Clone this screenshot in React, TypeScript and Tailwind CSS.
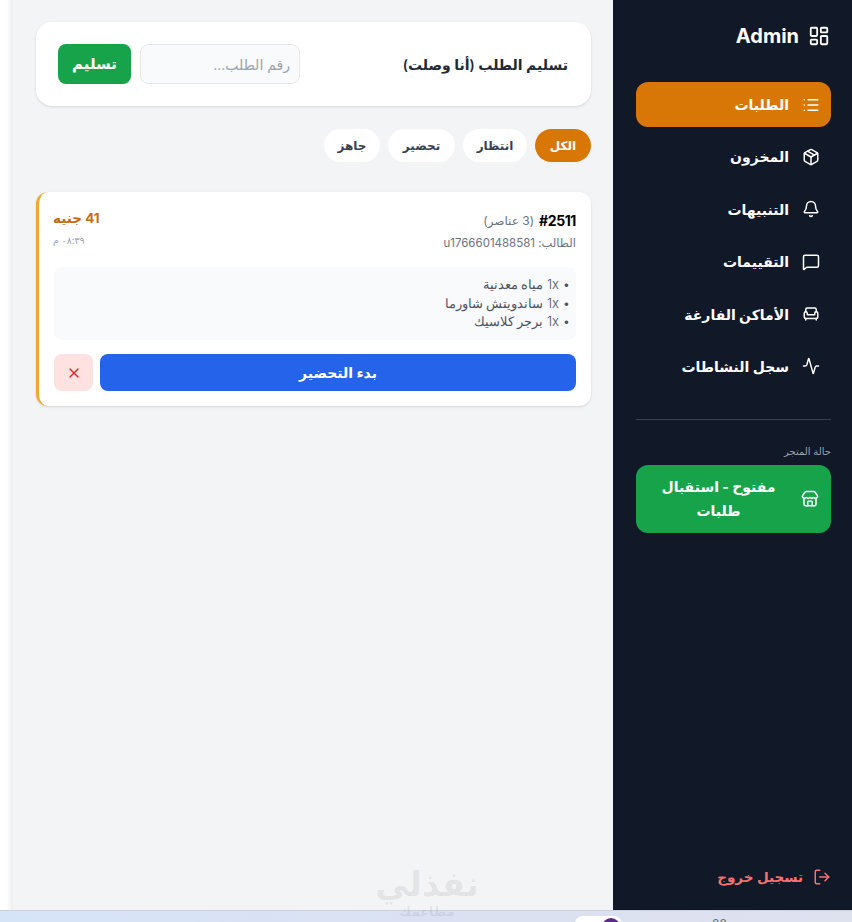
import { LayoutDashboard, List, Package, Bell, MessageSquare, Armchair, Activity, Store, LogOut, X } from "lucide-react";

const nav = [
  { label: "الطلبات", Icon: List, active: true },
  { label: "المخزون", Icon: Package },
  { label: "التنبيهات", Icon: Bell },
  { label: "التقييمات", Icon: MessageSquare },
  { label: "الأماكن الفارغة", Icon: Armchair },
  { label: "سجل النشاطات", Icon: Activity },
];

const chips = [
  { t: "الكل", c: "w-[56px] bg-[#d97706] font-bold text-white" },
  { t: "انتظار", c: "w-[64px] bg-white font-semibold text-[#374151]" },
  { t: "تحضير", c: "w-[67px] bg-white font-semibold text-[#374151]" },
  { t: "جاهز", c: "w-[56px] bg-white font-semibold text-[#374151]" },
];

const font = "font-['Inter','Noto_Sans','DejaVu_Sans',sans-serif]";

export default function App() {
  return (
    <div dir="rtl" className={`relative flex h-[922px] w-[852px] flex-col overflow-hidden bg-white ${font}`}>
      <div className="flex h-[910px] w-full shrink-0">
        <aside className="flex h-full w-[239px] shrink-0 flex-col bg-[#111827] pr-[21px] pl-[23px] text-white">
          <div className="flex h-[72px] items-center gap-[9px] pr-[1px]">
            <LayoutDashboard size={22} strokeWidth={2} />
            <span className="text-[20px] font-bold">Admin</span>
          </div>
          <nav className="mt-[10px] flex flex-col gap-[7.4px]">
            {nav.map(({ label, Icon, active }) => (
              <div key={label} className={`flex h-[45px] items-center gap-[13px] rounded-[12px] px-[11px] text-[14px] font-bold ${active ? "bg-[#d97706]" : ""}`}>
                <Icon size={18} />
                <span>{label}</span>
              </div>
            ))}
          </nav>
          <div className="mt-[30.4px] border-t border-[#374151] pt-[24px]">
            <div className="mb-[6px] text-[10px] text-[#9ca3af]">حالة المتجر</div>
            <div className="flex h-[68px] items-center gap-[12px] rounded-[12px] bg-[#16a34a] px-[12px] text-[14px] font-bold">
              <Store size={18} className="shrink-0" />
              <span className="flex-1 text-center leading-[24px]">مفتوح - استقبال طلبات</span>
            </div>
          </div>
          <div className="mt-auto mb-[23px] flex items-center gap-[10px] text-[13.5px] font-semibold text-[#f87171]">
            <LogOut size={18} />
            <span>تسجيل خروج</span>
          </div>
        </aside>
        <main className="h-full flex-1 bg-[#f3f4f6] pt-[22px] pr-[22px] pl-[23px]">
          <section className="flex h-[84px] items-center justify-between rounded-[16px] bg-white pr-[23px] pl-[22px] shadow-sm">
            <h2 className="text-[14px] font-semibold text-[#1f2937]">تسليم الطلب (أنا وصلت)</h2>
            <div className="flex gap-[9px]">
              <input placeholder="رقم الطلب..." className="h-[40px] w-[160px] rounded-[8px] border border-[#e5e7eb] bg-[#f9fafb] px-[9px] text-[14px] placeholder:text-[#9ca3af]" />
              <button className="h-[40px] w-[73px] rounded-[8px] bg-[#16a34a] text-[15px] font-bold text-white">تسليم</button>
            </div>
          </section>
          <div className="mt-[23px] flex gap-[8px]">
            {chips.map(({ t, c }) => (
              <button key={t} className={`h-[33px] rounded-full text-[12px] ${c}`}>{t}</button>
            ))}
          </div>
          <article className="mt-[30px] rounded-[12px] border-l-[3px] border-[#f0a92e] bg-white pt-[18px] pr-[15px] pb-[15px] pl-[15px] shadow-sm">
            <div className="flex items-start justify-between">
              <div>
                <div className="flex items-center gap-[5px]">
                  <span className="text-[14px] font-bold tracking-[-0.4px] text-black">#2511</span>
                  <span className="text-[12px] text-[#6b7280]">(3 عناصر)</span>
                </div>
                <div className="mt-[4px] text-[11.5px] text-[#6b7280]">الطالب: u1766601488581</div>
              </div>
              <div className="-mt-[1px] -ml-[1px] text-left">
                <div className="text-[13.5px] leading-[18px] font-bold text-[#c26d14]">41 جنيه</div>
                <div className="mt-[7px] text-[9.5px] text-[#9ca3af]">٠٨:٣٩ م</div>
              </div>
            </div>
            <div className="mt-[15px] h-[73px] rounded-[8px] bg-[#f9fafb] py-[8px] pr-[6px] pl-[8px] text-[13px] leading-[18.5px] font-light text-[#4b5563]">
              <div>• 1x مياه معدنية</div>
              <div>• 1x ساندويتش شاورما</div>
              <div>• 1x برجر كلاسيك</div>
            </div>
            <div className="mt-[14px] flex gap-[7px]">
              <button className="h-[37px] flex-1 rounded-[8px] bg-[#2563eb] text-[14px] font-bold text-white">بدء التحضير</button>
              <button className="flex h-[37px] w-[39px] items-center justify-center rounded-[8px] bg-[#fee2e2] text-[#dc2626]"><X size={16} /></button>
            </div>
          </article>
        </main>
        <div className="w-[13px] bg-gradient-to-r from-white via-white to-[#eceef0]"></div>
      </div>
      <div className="relative h-[12px] flex-1 border-t border-[#c8d0e0] bg-gradient-to-r from-[#d6e4f8] via-[#dbe1f2] to-[#dee1ee]">
        <div className="absolute top-[5px] left-[575px] h-[10px] w-[47px] rounded-t-[8px] bg-white"></div>
        <div className="absolute top-[7px] left-[602px] h-[10px] w-[18px] rounded-t-full bg-[#5c2a8c]"></div>
        <div className="absolute top-[7px] left-[712px] text-[12px] leading-none text-[#6b7280]">88</div>
      </div>
      <div className="pointer-events-none absolute top-[864px] left-[375px] w-[104px] text-center font-black text-[#00000012]">
        <div className="text-[34px] leading-[40px]">نفذلي</div>
        <div className="text-[13px] leading-[14px] font-bold">مطاعمك</div>
      </div>
    </div>
  );
}
